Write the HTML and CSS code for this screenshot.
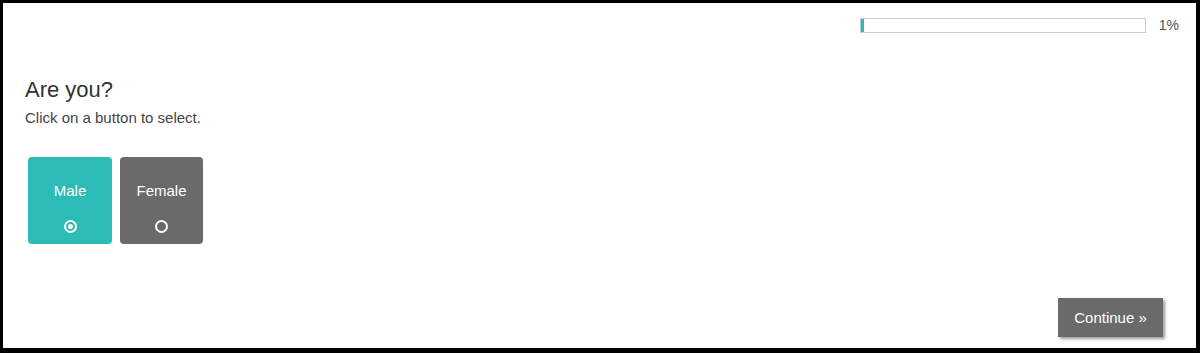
FILE: index.html
```html
<!DOCTYPE html>
<html lang="en">
<head>
    <meta charset="UTF-8">
    <title>Are you?</title>
    <link rel="stylesheet" href="styles.css">
</head>
<body>
    <div class="frame">
        <div class="progress-row">
            <div class="progress-bar"><div class="progress-fill"></div></div>
            <span class="progress-text">1%</span>
        </div>

        <h1 class="question">Are you?</h1>
        <p class="hint">Click on a button to select.</p>

        <div class="choices">
            <div class="choice selected">
                <span class="choice-label">Male</span>
                <span class="radio"></span>
            </div>
            <div class="choice">
                <span class="choice-label">Female</span>
                <span class="radio"></span>
            </div>
        </div>

        <div class="footer">
            <button class="btn-continue">Continue &raquo;</button>
        </div>
    </div>
</body>
</html>
```

FILE: styles.css
```css
html, body {
    margin: 0;
    padding: 0;
    height: 100%;
}
body {
    font-family: "Liberation Sans", Arial, sans-serif;
    background-color: #fff;
}
.frame {
    box-sizing: border-box;
    height: 353px;
    border-style: solid;
    border-color: #000;
    border-width: 3px 4px 5px 3px;
    padding: 14px 0 0 22px;
    display: flex;
    flex-direction: column;
}
.progress-row {
    display: flex;
    justify-content: flex-end;
    align-items: center;
    gap: 13px;
    padding-right: 17px;
}
.progress-bar {
    box-sizing: border-box;
    width: 286px;
    height: 15px;
    border: 1px solid #ccc;
    background-color: #fff;
}
.progress-fill {
    width: 3px;
    height: 100%;
    background-color: #2bbcb7;
}
.progress-text {
    font-size: 14px;
    color: #555;
}
.question {
    font-size: 22px;
    font-weight: normal;
    line-height: 26px;
    color: #333;
    margin: 44px 0 0 0;
}
.hint {
    font-size: 15px;
    line-height: 20px;
    color: #444;
    margin: 5px 0 0 0;
}
.choices {
    display: flex;
    gap: 8px;
    margin: 29px 0 0 3px;
}
.choice {
    width: 84px;
    height: 87px;
    border-radius: 4px;
    background-color: #6a6a6a;
    color: #fff;
    display: flex;
    flex-direction: column;
    align-items: center;
    cursor: pointer;
}
.choice + .choice {
    width: 83px;
}
.choice.selected {
    background-color: #2bbcb7;
}
.choice-label {
    font-size: 15px;
    line-height: 18px;
    margin-top: 25px;
}
.radio {
    box-sizing: border-box;
    width: 13px;
    height: 13px;
    margin-top: 20px;
    border: 2px solid #fff;
    border-radius: 50%;
    display: flex;
    align-items: center;
    justify-content: center;
}
.choice.selected .radio::after {
    content: "";
    width: 5px;
    height: 5px;
    border-radius: 50%;
    background-color: #fff;
}
.footer {
    margin-top: auto;
    display: flex;
    justify-content: flex-end;
    padding: 0 33px 11px 0;
}
.btn-continue {
    width: 105px;
    height: 39px;
    border: none;
    background-color: #6a6a6a;
    color: #fff;
    font-family: "Liberation Sans", Arial, sans-serif;
    font-size: 15px;
    box-shadow: 2px 2px 3px rgba(0,0,0,0.4);
    cursor: pointer;
}
```
